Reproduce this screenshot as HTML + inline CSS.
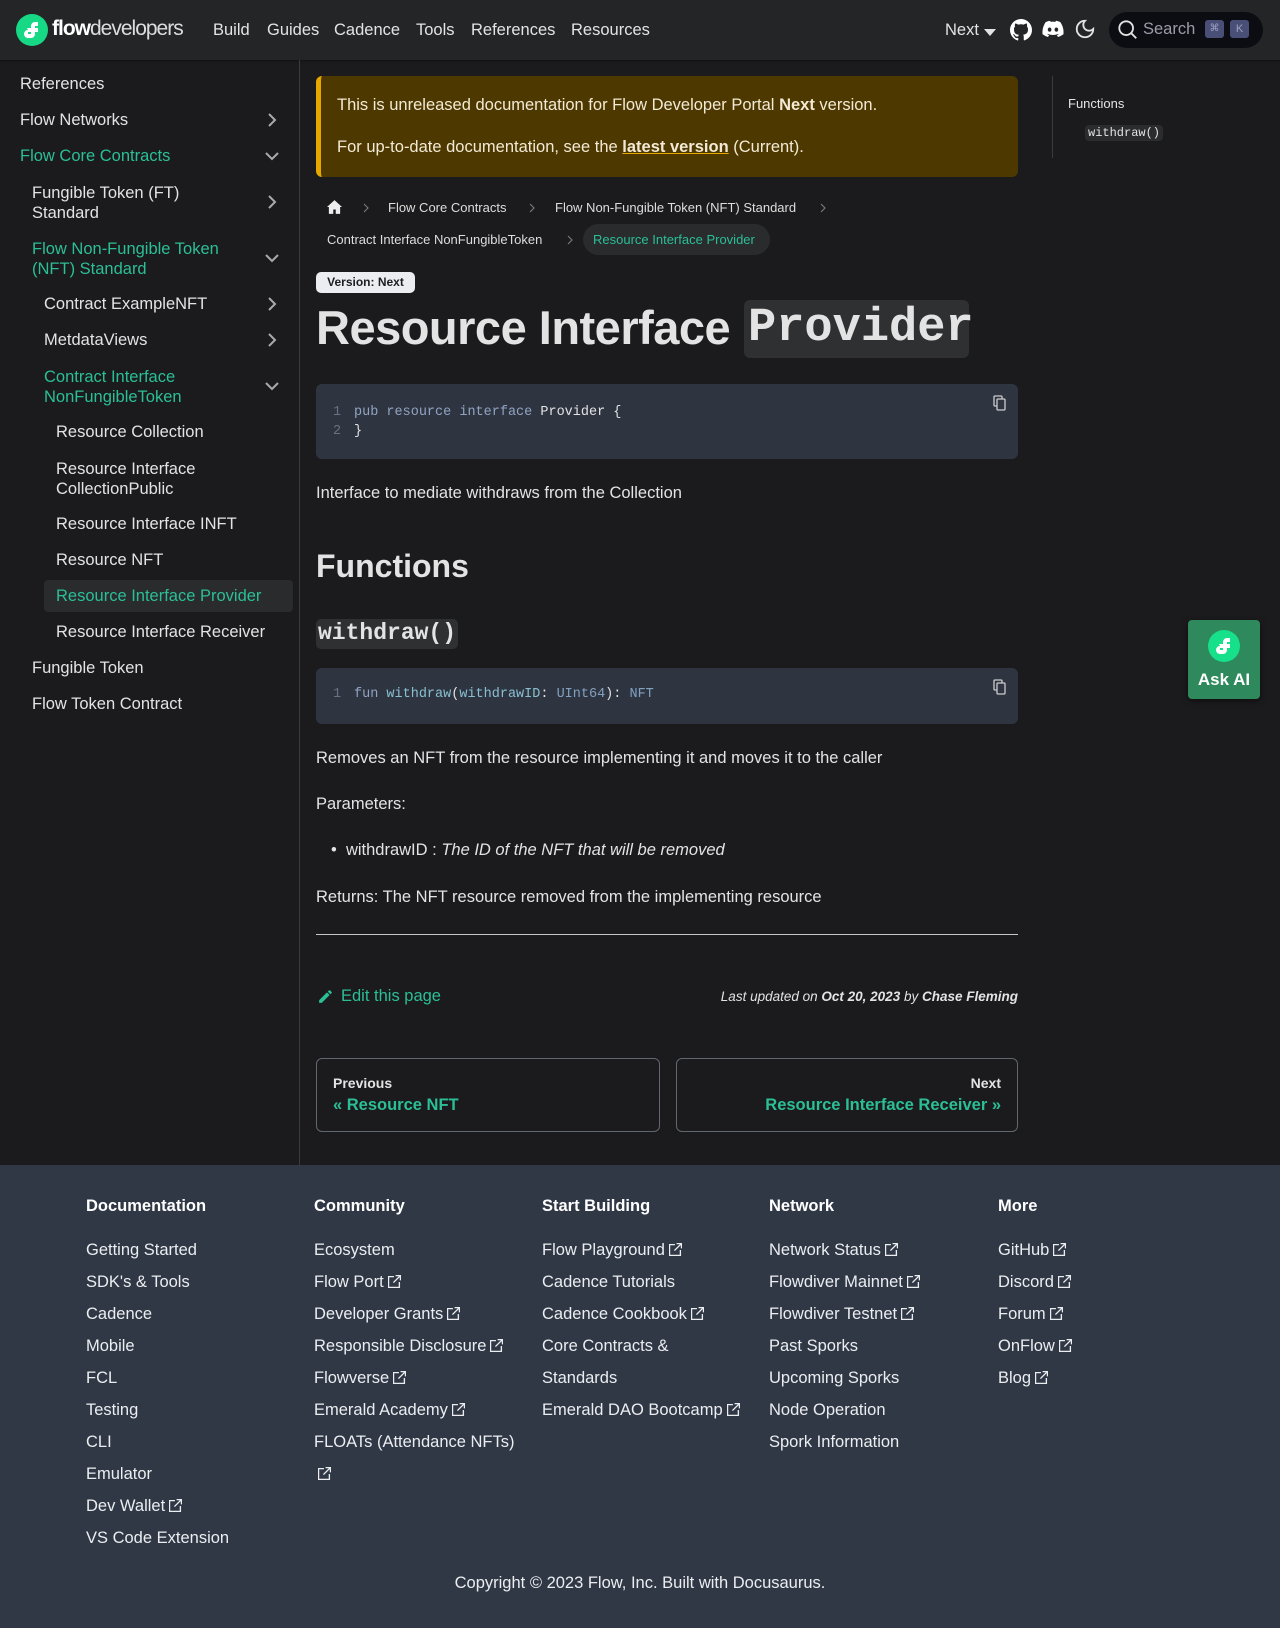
<!DOCTYPE html>
<html><head><meta charset="utf-8">
<style>
*{box-sizing:border-box;margin:0;padding:0}
body{width:1280px;height:1628px;background:#1b1b1d;color:#e3e3e3;font-family:"Liberation Sans",sans-serif;position:relative;overflow:hidden;font-size:16px}
.a{position:absolute;white-space:nowrap}
.mono{font-family:"Liberation Mono","DejaVu Sans Mono",monospace}
header{position:absolute;left:0;top:0;width:1280px;height:60px;background:#242526;box-shadow:0 1px 2px rgba(0,0,0,.4)}
.nav{font-size:16.5px;color:#e3e3e3;top:21px}
.side{font-size:16.5px;color:#e3e3e3}
.chev{position:absolute;left:264px;width:16px;height:16px}
.fh{font-weight:bold;font-size:16.5px;color:#fff;top:1197px}
.fl{font-size:16.5px;color:#ebedf0}
.ext{display:inline-block;width:13px;height:13px;vertical-align:-1px;margin-left:4px}
.t{color:#2bbf96 !important}
</style></head><body>
<header>
<svg class="a" style="left:16px;top:14px" width="32" height="32" viewBox="0 0 32 32"><circle cx="16" cy="16" r="16" fill="#16d885"/><path d="M11 14h4v-2a4 4 0 0 1 4-4h3v4h-3v2h3v4h-3v2a4 4 0 0 1-4 4h-3a4 4 0 0 1 0-8zm4 4h-3v2h3z" fill="#fff"/></svg>
<div class="a" style="left:52px;top:17px;font-size:21px;color:#fff;letter-spacing:-1px"><b>flow</b><span style="font-weight:300;color:#ddd">developers</span></div>
<div class="a nav" style="left:213px">Build</div>
<div class="a nav" style="left:267px">Guides</div>
<div class="a nav" style="left:334px">Cadence</div>
<div class="a nav" style="left:416px">Tools</div>
<div class="a nav" style="left:471px">References</div>
<div class="a nav" style="left:571px">Resources</div>
<div class="a nav" style="left:945px">Next</div>
<svg class="a" style="left:984px;top:29px" width="12" height="7"><path d="M0 0h12L6 7z" fill="#e3e3e3"/></svg>
<svg class="a" style="left:1010px;top:19px" width="22" height="22" viewBox="0 0 16 16"><path fill="#fff" d="M8 0C3.6 0 0 3.6 0 8c0 3.5 2.3 6.5 5.5 7.6.4.1.5-.2.5-.4v-1.4c-2.2.5-2.7-1-2.7-1-.4-.9-.9-1.200-.9-1.200-.7-.5.1-.5.1-.5.8.1 1.2.8 1.2.8.7 1.2 1.9.9 2.3.7.1-.5.3-.9.5-1.1-1.8-.2-3.6-.9-3.6-4 0-.9.3-1.600.8-2.100-.1-.2-.4-1 .1-2.100 0 0 .7-.2 2.200.8.6-.2 1.300-.3 2-.3s1.400.1 2 .3c1.500-1 2.200-.8 2.200-.8.4 1.100.2 1.900.1 2.100.5.6.8 1.300.8 2.100 0 3.100-1.900 3.700-3.600 3.900.3.3.5.8.5 1.500v2.200c0 .2.1.5.6.4C13.700 14.500 16 11.500 16 8c0-4.400-3.600-8-8-8z"/></svg>
<svg class="a" style="left:1042px;top:20px" width="22" height="18" viewBox="0 0 24 18"><path fill="#fff" d="M20 1.5A20 20 0 0 0 15.2 0l-.6 1.2a18 18 0 0 0-5.2 0L8.8 0A20 20 0 0 0 4 1.5C1 6 .2 10.4.6 14.7A20 20 0 0 0 6.5 17.7l1.3-2a13 13 0 0 1-2-1l.5-.4a14 14 0 0 0 11.4 0l.5.4a13 13 0 0 1-2 1l1.3 2a20 20 0 0 0 5.9-3c.5-5-.8-9.4-3.4-13.2zM8.3 12c-1.1 0-2-1-2-2.3s.9-2.3 2-2.3 2 1 2 2.3-.9 2.3-2 2.3zm7.4 0c-1.1 0-2-1-2-2.3s.9-2.3 2-2.3 2 1 2 2.3-.9 2.3-2 2.3z"/></svg>
<svg class="a" style="left:1074px;top:18px" width="22" height="22" viewBox="0 0 24 24"><path fill="none" stroke="#e3e3e3" stroke-width="2" d="M12 3a6 6 0 0 0 9 9 9 9 0 1 1-9-9z"/></svg>
<div class="a" style="left:1109px;top:12px;width:154px;height:36px;border-radius:18px;background:#0c0d12"></div>
<svg class="a" style="left:1117px;top:19px" width="22" height="22" viewBox="0 0 24 24"><circle cx="10" cy="10" r="7.5" fill="none" stroke="#e3e3e3" stroke-width="2"/><path d="M15.5 15.5 21 21" stroke="#e3e3e3" stroke-width="2"/></svg>
<div class="a" style="left:1143px;top:20px;font-size:16.5px;color:#9a9ca8">Search</div>
<div class="a" style="left:1205px;top:20px;width:19px;height:18px;background:#4a4f78;border-radius:3px;font-size:10px;color:#9ba0c0;text-align:center;line-height:18px">⌘</div>
<div class="a" style="left:1230px;top:20px;width:19px;height:18px;background:#4a4f78;border-radius:3px;font-size:11px;color:#9ba0c0;text-align:center;line-height:18px">K</div>
</header>

<!-- sidebar -->
<div class="a" style="left:299px;top:60px;width:1px;height:1105px;background:#3a3b3d"></div>
<div class="a side" style="left:20px;top:75px">References</div>
<div class="a side" style="left:20px;top:111px">Flow Networks</div>
<div class="a side t" style="left:20px;top:147px">Flow Core Contracts</div>
<div class="a side" style="left:32px;top:183px;line-height:20px">Fungible Token (FT)<br>Standard</div>
<div class="a side t" style="left:32px;top:239px;line-height:20px">Flow Non-Fungible Token<br>(NFT) Standard</div>
<div class="a side" style="left:44px;top:295px">Contract ExampleNFT</div>
<div class="a side" style="left:44px;top:331px">MetdataViews</div>
<div class="a side t" style="left:44px;top:367px;line-height:20px">Contract Interface<br>NonFungibleToken</div>
<div class="a side" style="left:56px;top:423px">Resource Collection</div>
<div class="a side" style="left:56px;top:459px;line-height:20px">Resource Interface<br>CollectionPublic</div>
<div class="a side" style="left:56px;top:515px">Resource Interface INFT</div>
<div class="a side" style="left:56px;top:551px">Resource NFT</div>
<div class="a" style="left:44px;top:580px;width:249px;height:32px;background:#2a2b2d;border-radius:4px"></div>
<div class="a side t" style="left:56px;top:587px">Resource Interface Provider</div>
<div class="a side" style="left:56px;top:623px">Resource Interface Receiver</div>
<div class="a side" style="left:32px;top:659px">Fungible Token</div>
<div class="a side" style="left:32px;top:695px">Flow Token Contract</div>
<svg class="chev" style="top:112px" viewBox="0 0 16 16"><path d="M5 2l6 6-6 6" fill="none" stroke="#aaa" stroke-width="2"/></svg>
<svg class="chev" style="top:148px" viewBox="0 0 16 16"><path d="M2 5l6 6 6-6" fill="none" stroke="#aaa" stroke-width="2"/></svg>
<svg class="chev" style="top:194px" viewBox="0 0 16 16"><path d="M5 2l6 6-6 6" fill="none" stroke="#aaa" stroke-width="2"/></svg>
<svg class="chev" style="top:250px" viewBox="0 0 16 16"><path d="M2 5l6 6 6-6" fill="none" stroke="#aaa" stroke-width="2"/></svg>
<svg class="chev" style="top:296px" viewBox="0 0 16 16"><path d="M5 2l6 6-6 6" fill="none" stroke="#aaa" stroke-width="2"/></svg>
<svg class="chev" style="top:332px" viewBox="0 0 16 16"><path d="M5 2l6 6-6 6" fill="none" stroke="#aaa" stroke-width="2"/></svg>
<svg class="chev" style="top:378px" viewBox="0 0 16 16"><path d="M2 5l6 6 6-6" fill="none" stroke="#aaa" stroke-width="2"/></svg>

<!-- banner -->
<div class="a" style="left:316px;top:76px;width:702px;height:101px;background:#4d3800;border-left:5px solid #e6a700;border-radius:6px"></div>
<div class="a" style="left:337px;top:96px;font-size:16.5px;color:#f3ead5">This is unreleased documentation for Flow Developer Portal <b>Next</b> version.</div>
<div class="a" style="left:337px;top:138px;font-size:16.5px;color:#f3ead5">For up-to-date documentation, see the <b style="text-decoration:underline;text-decoration-color:#e6a700">latest version</b> (Current).</div>

<!-- breadcrumbs -->
<svg class="a" style="left:327px;top:200px" width="15" height="14" viewBox="0 0 24 22"><path d="M12 0 0 11h3v11h7v-7h4v7h7V11h3z" fill="#eee"/></svg>
<svg class="a" style="left:362px;top:203px" width="8" height="10" viewBox="0 0 8 10"><path d="M2 1l4 4-4 4" fill="none" stroke="#777" stroke-width="1.2"/></svg>
<div class="a" style="left:388px;top:200px;font-size:13px;color:#ddd">Flow Core Contracts</div>
<svg class="a" style="left:528px;top:203px" width="8" height="10" viewBox="0 0 8 10"><path d="M2 1l4 4-4 4" fill="none" stroke="#777" stroke-width="1.2"/></svg>
<div class="a" style="left:555px;top:200px;font-size:13px;color:#ddd">Flow Non-Fungible Token (NFT) Standard</div>
<svg class="a" style="left:819px;top:203px" width="8" height="10" viewBox="0 0 8 10"><path d="M2 1l4 4-4 4" fill="none" stroke="#777" stroke-width="1.2"/></svg>
<div class="a" style="left:327px;top:232px;font-size:13px;color:#ddd">Contract Interface NonFungibleToken</div>
<svg class="a" style="left:566px;top:235px" width="8" height="10" viewBox="0 0 8 10"><path d="M2 1l4 4-4 4" fill="none" stroke="#777" stroke-width="1.2"/></svg>
<div class="a" style="left:583px;top:224px;width:187px;height:31px;border-radius:16px;background:#2a2b2d"></div>
<div class="a t" style="left:593px;top:232px;font-size:13px">Resource Interface Provider</div>

<div class="a" style="left:316px;top:272px;width:99px;height:21px;background:#ebedf0;border-radius:5px;color:#1c1e21;font-weight:bold;font-size:12px;text-align:center;line-height:21px">Version: Next</div>
<div class="a" style="left:316px;top:300px;font-size:47px;font-weight:bold;color:#e3e3e3;letter-spacing:-0.5px">Resource Interface</div>
<div class="a" style="left:744px;top:300px;width:225px;height:58px;background:#2f3032;border-radius:6px"></div>
<div class="a mono" style="left:748px;top:302px;font-size:47px;font-weight:bold;color:#e3e3e3">Provider</div>

<!-- code 1 -->
<div class="a" style="left:316px;top:384px;width:702px;height:75px;background:#2f3441;border-radius:6px"></div>
<div class="a mono" style="left:333px;top:403px;font-size:13.5px;line-height:19px;color:#6b7180">1<br>2</div>
<div class="a mono" style="left:354px;top:403px;font-size:13.5px;line-height:19px;color:#e3e3e3"><span style="color:#90a4c2">pub</span> <span style="color:#90a4c2">resource</span> <span style="color:#90a4c2">interface</span> Provider {<br>}</div>
<svg class="a" style="left:993px;top:395px" width="14" height="16" viewBox="0 0 14 16"><rect x="1" y="1" width="8" height="10" rx="1" fill="none" stroke="#ccc" stroke-width="1.3"/><rect x="4" y="4" width="8" height="11" rx="1" fill="#2f3441" stroke="#ccc" stroke-width="1.3"/></svg>

<div class="a" style="left:316px;top:484px;font-size:16.5px">Interface to mediate withdraws from the Collection</div>
<div class="a" style="left:316px;top:548px;font-size:32px;font-weight:bold;color:#e3e3e3">Functions</div>
<div class="a" style="left:316px;top:619px;width:142px;height:30px;background:#2f3032;border-radius:5px"></div>
<div class="a mono" style="left:318px;top:620px;font-size:23px;font-weight:bold;color:#e3e3e3">withdraw()</div>

<!-- code 2 -->
<div class="a" style="left:316px;top:668px;width:702px;height:56px;background:#2f3441;border-radius:6px"></div>
<div class="a mono" style="left:333px;top:687px;font-size:13.5px;color:#6b7180">1</div>
<div class="a mono" style="left:354px;top:687px;font-size:13.5px;color:#e3e3e3"><span style="color:#90a4c2">fun</span> <span style="color:#88c0d0">withdraw</span>(<span style="color:#88c0d0">withdrawID</span>: <span style="color:#81a1c1">UInt64</span>): <span style="color:#81a1c1">NFT</span></div>
<svg class="a" style="left:993px;top:679px" width="14" height="16" viewBox="0 0 14 16"><rect x="1" y="1" width="8" height="10" rx="1" fill="none" stroke="#ccc" stroke-width="1.3"/><rect x="4" y="4" width="8" height="11" rx="1" fill="#2f3441" stroke="#ccc" stroke-width="1.3"/></svg>

<div class="a" style="left:316px;top:749px;font-size:16.5px">Removes an NFT from the resource implementing it and moves it to the caller</div>
<div class="a" style="left:316px;top:795px;font-size:16.5px">Parameters:</div>
<div class="a" style="left:331px;top:841px;font-size:16.5px">•&nbsp;&nbsp;withdrawID : <i>The ID of the NFT that will be removed</i></div>
<div class="a" style="left:316px;top:888px;font-size:16.5px">Returns: The NFT resource removed from the implementing resource</div>
<div class="a" style="left:316px;top:934px;width:702px;height:1px;background:#c8c8c8"></div>

<svg class="a" style="left:317px;top:988px" width="17" height="17" viewBox="0 0 24 24"><path d="M3 17.25V21h3.75L17.8 9.94l-3.75-3.75zM20.7 7.04a1 1 0 0 0 0-1.41l-2.34-2.34a1 1 0 0 0-1.41 0l-1.83 1.83 3.75 3.75z" fill="#2bbf96"/></svg>
<div class="a t" style="left:341px;top:987px;font-size:16.5px">Edit this page</div>
<div class="a" style="left:618px;width:400px;text-align:right;top:989px;font-size:13.5px;font-style:italic;color:#e3e3e3">Last updated on <b>Oct 20, 2023</b> by <b>Chase Fleming</b></div>

<div class="a" style="left:316px;top:1058px;width:344px;height:74px;border:1px solid #606770;border-radius:6px"></div>
<div class="a" style="left:333px;top:1075px;font-size:14px;font-weight:bold;color:#e3e3e3">Previous</div>
<div class="a t" style="left:333px;top:1096px;font-size:16.5px;font-weight:bold">« Resource NFT</div>
<div class="a" style="left:676px;top:1058px;width:342px;height:74px;border:1px solid #606770;border-radius:6px"></div>
<div class="a" style="left:676px;width:325px;text-align:right;top:1075px;font-size:14px;font-weight:bold;color:#e3e3e3">Next</div>
<div class="a t" style="left:676px;width:325px;text-align:right;top:1096px;font-size:16.5px;font-weight:bold">Resource Interface Receiver »</div>

<!-- TOC -->
<div class="a" style="left:1052px;top:76px;width:1px;height:82px;background:#3a3b3d"></div>
<div class="a" style="left:1068px;top:96px;font-size:13px;color:#e3e3e3">Functions</div>
<div class="a mono" style="left:1085px;top:125px;padding:1px 3px;background:#2b2c2e;border-radius:4px;font-size:12px;color:#e3e3e3">withdraw()</div>

<!-- Ask AI -->
<div class="a" style="left:1188px;top:620px;width:72px;height:79px;background:#2e8a5c;border-radius:4px;box-shadow:0 2px 6px rgba(0,0,0,.5)"></div>
<svg class="a" style="left:1208px;top:630px" width="32" height="32" viewBox="0 0 32 32"><circle cx="16" cy="16" r="16" fill="#16e08a"/><path d="M11 14h4v-2a4 4 0 0 1 4-4h3v4h-3v2h3v4h-3v2a4 4 0 0 1-4 4h-3a4 4 0 0 1 0-8zm4 4h-3v2h3z" fill="#fff"/></svg>
<div class="a" style="left:1188px;width:72px;text-align:center;top:670px;font-size:17px;font-weight:bold;color:#fff">Ask AI</div>

<!-- footer -->
<div class="a" style="left:0;top:1165px;width:1280px;height:463px;background:#303846"></div>
<div class="a fh" style="left:86px">Documentation</div>
<div class="a fh" style="left:314px">Community</div>
<div class="a fh" style="left:542px">Start Building</div>
<div class="a fh" style="left:769px">Network</div>
<div class="a fh" style="left:998px">More</div>
<div class="a fl" style="left:86px;top:1234px;line-height:32px">Getting Started<br>SDK's &amp; Tools<br>Cadence<br>Mobile<br>FCL<br>Testing<br>CLI<br>Emulator<br>Dev Wallet<svg class="ext" viewBox="0 0 24 24"><path d="M21 13v10H1V3h10M14 1h9v9M10 14 23 1" fill="none" stroke="#ebedf0" stroke-width="2.5"/></svg><br>VS Code Extension</div>
<div class="a fl" style="left:314px;top:1234px;line-height:32px">Ecosystem<br>Flow Port<svg class="ext" viewBox="0 0 24 24"><path d="M21 13v10H1V3h10M14 1h9v9M10 14 23 1" fill="none" stroke="#ebedf0" stroke-width="2.5"/></svg><br>Developer Grants<svg class="ext" viewBox="0 0 24 24"><path d="M21 13v10H1V3h10M14 1h9v9M10 14 23 1" fill="none" stroke="#ebedf0" stroke-width="2.5"/></svg><br>Responsible Disclosure<svg class="ext" viewBox="0 0 24 24"><path d="M21 13v10H1V3h10M14 1h9v9M10 14 23 1" fill="none" stroke="#ebedf0" stroke-width="2.5"/></svg><br>Flowverse<svg class="ext" viewBox="0 0 24 24"><path d="M21 13v10H1V3h10M14 1h9v9M10 14 23 1" fill="none" stroke="#ebedf0" stroke-width="2.5"/></svg><br>Emerald Academy<svg class="ext" viewBox="0 0 24 24"><path d="M21 13v10H1V3h10M14 1h9v9M10 14 23 1" fill="none" stroke="#ebedf0" stroke-width="2.5"/></svg><br>FLOATs (Attendance NFTs)<br><svg class="ext" viewBox="0 0 24 24"><path d="M21 13v10H1V3h10M14 1h9v9M10 14 23 1" fill="none" stroke="#ebedf0" stroke-width="2.5"/></svg></div>
<div class="a fl" style="left:542px;top:1234px;line-height:32px">Flow Playground<svg class="ext" viewBox="0 0 24 24"><path d="M21 13v10H1V3h10M14 1h9v9M10 14 23 1" fill="none" stroke="#ebedf0" stroke-width="2.5"/></svg><br>Cadence Tutorials<br>Cadence Cookbook<svg class="ext" viewBox="0 0 24 24"><path d="M21 13v10H1V3h10M14 1h9v9M10 14 23 1" fill="none" stroke="#ebedf0" stroke-width="2.5"/></svg><br>Core Contracts &amp;<br>Standards<br>Emerald DAO Bootcamp<svg class="ext" viewBox="0 0 24 24"><path d="M21 13v10H1V3h10M14 1h9v9M10 14 23 1" fill="none" stroke="#ebedf0" stroke-width="2.5"/></svg></div>
<div class="a fl" style="left:769px;top:1234px;line-height:32px">Network Status<svg class="ext" viewBox="0 0 24 24"><path d="M21 13v10H1V3h10M14 1h9v9M10 14 23 1" fill="none" stroke="#ebedf0" stroke-width="2.5"/></svg><br>Flowdiver Mainnet<svg class="ext" viewBox="0 0 24 24"><path d="M21 13v10H1V3h10M14 1h9v9M10 14 23 1" fill="none" stroke="#ebedf0" stroke-width="2.5"/></svg><br>Flowdiver Testnet<svg class="ext" viewBox="0 0 24 24"><path d="M21 13v10H1V3h10M14 1h9v9M10 14 23 1" fill="none" stroke="#ebedf0" stroke-width="2.5"/></svg><br>Past Sporks<br>Upcoming Sporks<br>Node Operation<br>Spork Information</div>
<div class="a fl" style="left:998px;top:1234px;line-height:32px">GitHub<svg class="ext" viewBox="0 0 24 24"><path d="M21 13v10H1V3h10M14 1h9v9M10 14 23 1" fill="none" stroke="#ebedf0" stroke-width="2.5"/></svg><br>Discord<svg class="ext" viewBox="0 0 24 24"><path d="M21 13v10H1V3h10M14 1h9v9M10 14 23 1" fill="none" stroke="#ebedf0" stroke-width="2.5"/></svg><br>Forum<svg class="ext" viewBox="0 0 24 24"><path d="M21 13v10H1V3h10M14 1h9v9M10 14 23 1" fill="none" stroke="#ebedf0" stroke-width="2.5"/></svg><br>OnFlow<svg class="ext" viewBox="0 0 24 24"><path d="M21 13v10H1V3h10M14 1h9v9M10 14 23 1" fill="none" stroke="#ebedf0" stroke-width="2.5"/></svg><br>Blog<svg class="ext" viewBox="0 0 24 24"><path d="M21 13v10H1V3h10M14 1h9v9M10 14 23 1" fill="none" stroke="#ebedf0" stroke-width="2.5"/></svg></div>
<div class="a" style="left:0;width:1280px;text-align:center;top:1574px;font-size:16.5px;color:#ebedf0">Copyright © 2023 Flow, Inc. Built with Docusaurus.</div>
</body></html>
